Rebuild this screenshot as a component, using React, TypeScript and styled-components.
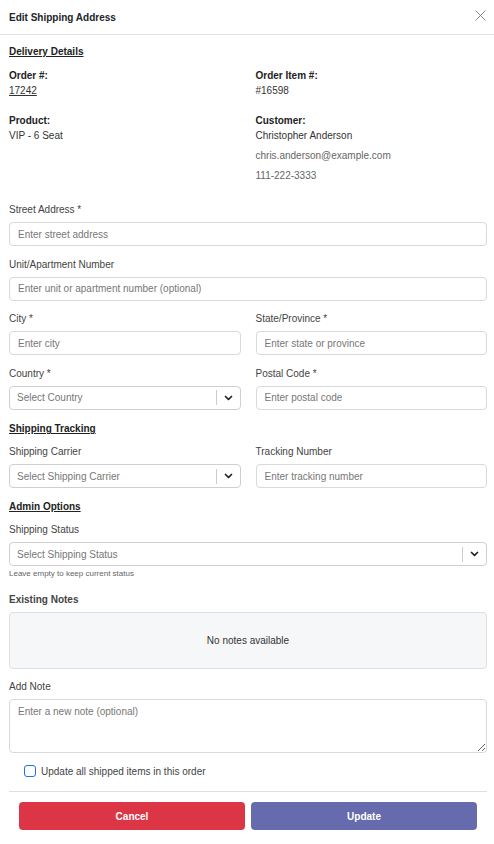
import React from "react";
import styled, { createGlobalStyle } from "styled-components";

const Global = createGlobalStyle`
  * { box-sizing: border-box; }
  html, body { margin: 0; padding: 0; background: #fff; }
  body {
    font-family: "Liberation Sans", Arial, sans-serif;
    font-size: 10px;
    color: #333;
  }
`;

const Modal = styled.div`
  width: 494px;
  background: #fff;
`;

const Header = styled.header`
  display: flex;
  align-items: center;
  justify-content: space-between;
  height: 35px;
  padding: 0 7px 0 9px;
  border-bottom: 1px solid #e2e2ec;
`;

const Title = styled.h1`
  margin: 0;
  font-size: 10px;
  font-weight: 700;
  color: #212529;
`;

const CloseButton = styled.button`
  display: flex;
  align-items: center;
  justify-content: center;
  width: 13px;
  height: 14px;
  padding: 0;
  border: none;
  background: none;
  color: #888;
  margin-top: -3px;
`;

const Body = styled.div`
  padding: 10px 7px 0 9px;
`;

const SectionTitle = styled.h2`
  margin: 0 0 9px;
  font-size: 10px;
  line-height: 14px;
  font-weight: 700;
  color: #222;
  text-decoration: underline;
`;

const InfoGrid = styled.div`
  display: grid;
  grid-template-columns: 1fr 1fr;
  column-gap: 15px;
  row-gap: 15px;
  margin-bottom: 20px;
`;

const InfoBlock = styled.div`
  display: flex;
  flex-direction: column;
`;

const InfoLabel = styled.div`
  font-weight: 700;
  line-height: 15px;
  color: #222;
`;

const InfoValue = styled.div<{ $muted?: boolean; $spaced?: boolean }>`
  line-height: 15px;
  margin-top: ${(p) => (p.$spaced ? 5 : 0)}px;
  color: ${(p) => (p.$muted ? "#666" : "#333")};
`;

const OrderLink = styled.a`
  line-height: 15px;
  color: #333;
  text-decoration: underline;
`;

const Row = styled.div`
  display: grid;
  grid-template-columns: 1fr 1fr;
  column-gap: 15px;
`;

const Field = styled.div<{ $gap?: number }>`
  display: flex;
  flex-direction: column;
  margin-bottom: ${(p) => p.$gap ?? 11.5}px;
`;

const Label = styled.label<{ $bold?: boolean }>`
  line-height: 14px;
  margin-bottom: 5px;
  color: #444;
  font-weight: ${(p) => (p.$bold ? 700 : 400)};
`;

const Input = styled.input`
  height: 24px;
  width: 100%;
  padding: 0 8px;
  border: 1px solid #d9d9d9;
  border-radius: 4px;
  font: inherit;
  color: #333;
  &::placeholder { color: #777; }
`;

const SelectBox = styled.div`
  display: flex;
  align-items: center;
  height: 24px;
  border: 1px solid #cfcfcf;
  border-radius: 4px;
  padding-left: 7px;
  color: #777;
`;

const SelectText = styled.span`
  flex: 1;
`;

const Separator = styled.span`
  width: 1px;
  height: 15px;
  background: #ccc;
`;

const Chevron = styled.span`
  display: flex;
  align-items: center;
  justify-content: center;
  width: 23px;
  color: #222;
`;

const Helper = styled.div`
  margin-top: 3px;
  font-size: 8px;
  line-height: 10px;
  color: #666;
`;

const NotesBox = styled.div`
  display: flex;
  align-items: center;
  justify-content: center;
  height: 57px;
  background: #f6f7f9;
  border: 1px solid #dedede;
  border-radius: 4px;
  color: #333;
`;

const TextArea = styled.textarea`
  height: 54px;
  width: 100%;
  padding: 6px 8px;
  border: 1px solid #d9d9d9;
  border-radius: 4px;
  font: inherit;
  color: #333;
  resize: vertical;
  &::placeholder { color: #777; }
`;

const CheckRow = styled.label`
  display: flex;
  align-items: center;
  gap: 5px;
  height: 14px;
  margin: 0 0 13px 15px;
  color: #444;
`;

const CheckBox = styled.span`
  width: 12px;
  height: 12px;
  border: 1px solid #1a73e8;
  border-radius: 3px;
  background: #fff;
`;

const Footer = styled.footer`
  margin: 0 7px 0 9px;
  padding: 10px 10px 14px;
  border-top: 1px solid #dcdfe4;
  display: grid;
  grid-template-columns: 1fr 1fr;
  column-gap: 6px;
`;

const Button = styled.button<{ $variant: "danger" | "primary" }>`
  height: 28px;
  border: none;
  border-radius: 4px;
  font: inherit;
  font-weight: 700;
  color: #fff;
  background: ${(p) => (p.$variant === "danger" ? "#dc3545" : "#666bad")};
`;

const ChevronIcon = () => (
  <svg width="9" height="6" viewBox="0 0 9 6" fill="none">
    <path d="M1.5 1.5 L4.5 4.3 L7.5 1.5" stroke="currentColor" strokeWidth="1.7" strokeLinecap="round" strokeLinejoin="round" />
  </svg>
);

const Select = ({ placeholder }: { placeholder: string }) => (
  <SelectBox>
    <SelectText>{placeholder}</SelectText>
    <Separator />
    <Chevron>
      <ChevronIcon />
    </Chevron>
  </SelectBox>
);

export default function App() {
  return (
    <>
      <Global />
      <Modal>
        <Header>
          <Title>Edit Shipping Address</Title>
          <CloseButton aria-label="Close">
            <svg width="11" height="11" viewBox="0 0 11 11">
              <path d="M0.5 0.5 L10.5 10.5 M10.5 0.5 L0.5 10.5" stroke="currentColor" strokeWidth="1" />
            </svg>
          </CloseButton>
        </Header>

        <Body>
          <SectionTitle>Delivery Details</SectionTitle>
          <InfoGrid>
            <InfoBlock>
              <InfoLabel>Order #:</InfoLabel>
              <OrderLink href="#">17242</OrderLink>
            </InfoBlock>
            <InfoBlock>
              <InfoLabel>Order Item #:</InfoLabel>
              <InfoValue>#16598</InfoValue>
            </InfoBlock>
            <InfoBlock>
              <InfoLabel>Product:</InfoLabel>
              <InfoValue>VIP - 6 Seat</InfoValue>
            </InfoBlock>
            <InfoBlock>
              <InfoLabel>Customer:</InfoLabel>
              <InfoValue>Christopher Anderson</InfoValue>
              <InfoValue $muted $spaced>chris.anderson@example.com</InfoValue>
              <InfoValue $muted $spaced>111-222-3333</InfoValue>
            </InfoBlock>
          </InfoGrid>

          <Field>
            <Label>Street Address *</Label>
            <Input placeholder="Enter street address" />
          </Field>
          <Field>
            <Label>Unit/Apartment Number</Label>
            <Input placeholder="Enter unit or apartment number (optional)" />
          </Field>
          <Row>
            <Field>
              <Label>City *</Label>
              <Input placeholder="Enter city" />
            </Field>
            <Field>
              <Label>State/Province *</Label>
              <Input placeholder="Enter state or province" />
            </Field>
          </Row>
          <Row>
            <Field $gap={12.5}>
              <Label>Country *</Label>
              <Select placeholder="Select Country" />
            </Field>
            <Field $gap={12.5}>
              <Label>Postal Code *</Label>
              <Input placeholder="Enter postal code" />
            </Field>
          </Row>

          <SectionTitle>Shipping Tracking</SectionTitle>
          <Row>
            <Field $gap={12}>
              <Label>Shipping Carrier</Label>
              <Select placeholder="Select Shipping Carrier" />
            </Field>
            <Field $gap={12}>
              <Label>Tracking Number</Label>
              <Input placeholder="Enter tracking number" />
            </Field>
          </Row>

          <SectionTitle>Admin Options</SectionTitle>
          <Field $gap={14}>
            <Label>Shipping Status</Label>
            <Select placeholder="Select Shipping Status" />
            <Helper>Leave empty to keep current status</Helper>
          </Field>

          <Field $gap={11}>
            <Label $bold>Existing Notes</Label>
            <NotesBox>No notes available</NotesBox>
          </Field>

          <Field $gap={11}>
            <Label>Add Note</Label>
            <TextArea placeholder="Enter a new note (optional)" />
          </Field>

          <CheckRow>
            <CheckBox />
            Update all shipped items in this order
          </CheckRow>
        </Body>

        <Footer>
          <Button $variant="danger">Cancel</Button>
          <Button $variant="primary">Update</Button>
        </Footer>
      </Modal>
    </>
  );
}
